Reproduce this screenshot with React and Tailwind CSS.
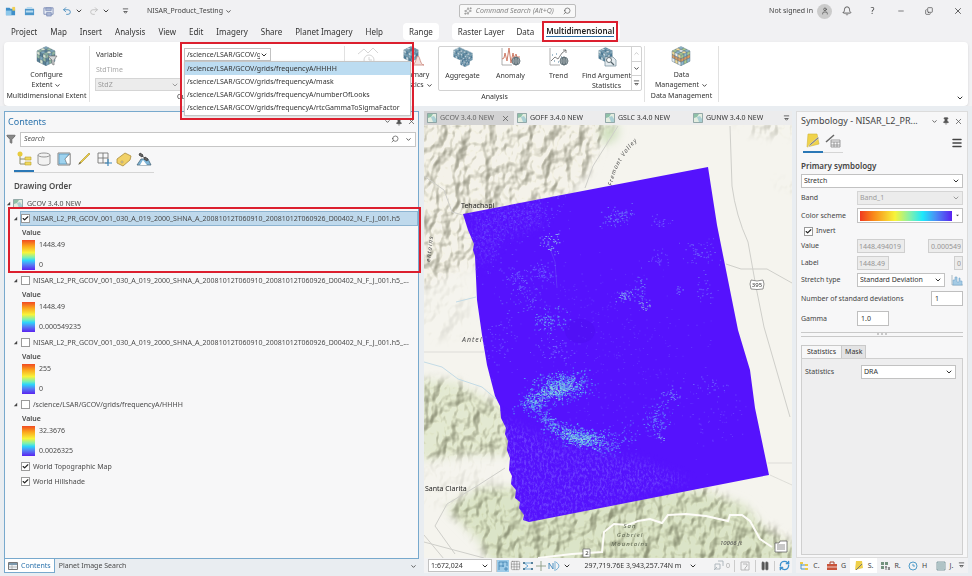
import React, { useState } from "react";
import {
  Bell,
  CheckIcon,
  ChevronDown,
  ChevronUp,
  Copy,
  Funnel,
  Grid3x3,
  Menu,
  Minus,
  Pause,
  Pin,
  Redo2,
  RefreshCw,
  Search,
  Sparkles,
  Undo2,
  User,
  X,
} from "lucide-react";

const MENU = ["Project", "Map", "Insert", "Analysis", "View", "Edit", "Imagery", "Share", "Planet Imagery", "Help"];

const VARIABLES = [
  "/science/LSAR/GCOV/grids/frequencyA/HHHH",
  "/science/LSAR/GCOV/grids/frequencyA/mask",
  "/science/LSAR/GCOV/grids/frequencyA/numberOfLooks",
  "/science/LSAR/GCOV/grids/frequencyA/rtcGammaToSigmaFactor",
];

const H5_NAME =
  "NISAR_L2_PR_GCOV_001_030_A_019_2000_SHNA_A_20081012T060910_20081012T060926_D00402_N_F_J_001.h5";

const LAYERS = [
  { id: "l1", name: H5_NAME, max: "1448.49", min: "0", checked: true },
  { id: "l2", name: H5_NAME + "_...", max: "1448.49", min: "0.000549235", checked: false },
  { id: "l3", name: H5_NAME + "_...", max: "255", min: "0", checked: false },
  { id: "l4", name: VARIABLES[0], max: "32.3676", min: "0.0026325", checked: false },
];

const MAP_TABS = ["GCOV 3.4.0 NEW", "GOFF 3.4.0 NEW", "GSLC 3.4.0 NEW", "GUNW 3.4.0 NEW"];

/* ---------- icons ---------- */

const BLUE_CUBE = ["#6f9db8", "#c7dde8", "#86afc4", "#4d7f9e"];
const DATA_CUBE = ["#8fb9cc", "#f0d896", "#a9c98f", "#e9eef0"];

// 3x3x3 isometric cube
function Cube({ colors = BLUE_CUBE, x = 0, y = 0, size = 20 }) {
  const cells = [];
  const faces = [
    { o: [10, 0.5], u: [3, 1.5], v: [-3, 1.5] },
    { o: [1, 5], u: [3, 1.5], v: [0, 3.4] },
    { o: [10, 9.5], u: [3, -1.5], v: [0, 3.4] },
  ];
  faces.forEach((f, n) => {
    for (let i = 0; i < 3; i++) {
      for (let j = 0; j < 3; j++) {
        const px = f.o[0] + f.u[0] * i + f.v[0] * j;
        const py = f.o[1] + f.u[1] * i + f.v[1] * j;
        const fill = colors === DATA_CUBE && n > 0 && j === 1 ? "#d9995f" : colors[(i * 2 + j + n) % 4];
        cells.push(
          <path
            key={`${n}${i}${j}`}
            d={`M${px} ${py}l${f.u[0]} ${f.u[1]}l${f.v[0]} ${f.v[1]}l${-f.u[0]} ${-f.u[1]}z`}
            fill={fill}
            stroke="#4a6878"
            strokeWidth=".4"
          />
        );
      }
    }
  });
  return (
    <svg x={x} y={y} width={size} height={size} viewBox="0 0 20 20">
      {cells}
    </svg>
  );
}

function Globe({ cx, cy }) {
  return (
    <g fill="#e8eef0" stroke="#53636b" strokeWidth=".8">
      <circle cx={cx} cy={cy} r="4" />
      <path d={`M${cx - 4} ${cy}h8M${cx} ${cy - 4}v8M${cx - 3} ${cy - 2}h6M${cx - 3} ${cy + 2}h6`} fill="none" />
      <ellipse cx={cx} cy={cy} rx="2" ry="4" fill="none" />
    </g>
  );
}

function RibbonIcon({ kind }) {
  return (
    <svg viewBox="0 0 22 20" className="h-5 w-[22px] shrink-0">
      {kind === "configure" && (
        <>
          <Cube colors={["#7fa9bd", "#dbe6d2", "#93b8a2", "#587f94"]} size={20} />
          <path d="M12 10h9l-3 4v5l-2-1v-4z" fill="#d5d8da" stroke="#777" strokeWidth=".7" />
        </>
      )}
      {kind === "summary" && (
        <>
          <Cube size={16} />
          <path d="M9 19c4 0 4-9 6-9s2 9 6 9z" fill="#f4dfdb" stroke="#c98478" strokeWidth=".8" />
        </>
      )}
      {kind === "aggregate" && (
        <>
          <Cube size={13} y={0} x={1} />
          <Cube size={13} y={3} x={8} />
          <Cube size={10} y={10} x={8} />
        </>
      )}
      {kind === "anomaly" && (
        <>
          <path d="M2 1v17h10" fill="none" stroke="#999" strokeWidth=".8" />
          <path d="M2 12l2-1 1-5 2 8 2-13 2 15 2-10 1 5 2-4 1 3h3" fill="none" stroke="#cf7d68" strokeWidth="1" />
          <Globe cx={16} cy={14} />
        </>
      )}
      {kind === "trend" && (
        <>
          <path d="M2 1v17h10" fill="none" stroke="#999" strokeWidth=".8" />
          <path d="M3 14l4-4 3 2 4-6 4-3M15 3h3v3" fill="none" stroke="#666" strokeWidth=".8" />
          <path d="M4 8h1M8 7h1M6 14h1M10 15h1M13 10h1" stroke="#4d7f9e" />
          <Globe cx={16} cy={14} />
        </>
      )}
      {kind === "argument" && (
        <>
          <Cube size={15} x={2} />
          <path d="M9 10h8l3 3v6H9z" fill="#e4ebef" stroke="#6d8795" strokeWidth=".7" />
          <circle cx="13" cy="13" r="2.5" fill="#fff" stroke="#53636b" strokeWidth=".9" />
          <path d="M15 15l3 3" stroke="#53636b" strokeWidth="1.2" />
        </>
      )}
      {kind === "data" && <Cube colors={DATA_CUBE} size={20} x={1} />}
      {kind === "time" && (
        <g fill="none" stroke="#d6d6d6" strokeWidth="1">
          <path d="M1 8l6-5 4 4 5-5 5 5" />
          <circle cx="12" cy="14" r="5" />
          <path d="M12 11v3h3" />
        </g>
      )}
    </svg>
  );
}

function MapIcon() {
  return (
    <svg viewBox="0 0 10 10" className="size-[10px] shrink-0">
      <path d="M.5.5h9v9h-9z" fill="#e3ede0" stroke="#6f8c8c" strokeWidth=".7" />
      <path d="M1 1h5L4 4 1 5z" fill="#8fc1a8" />
      <path d="M4 4l3-1 2 3v3H6z" fill="#a9cfd3" />
    </svg>
  );
}

function FileIcon({ kind }) {
  return (
    <svg viewBox="0 0 12 12" className="size-[11px] shrink-0">
      {kind === "new" && (
        <>
          <path d="M1 2h4l1 1h5v7H1z" fill="#3f8fc9" />
          <path d="M1 5h6v5H1z" fill="#8cc7ea" />
          <path d="M8 1h3v4H8z" fill="#f0cf52" />
        </>
      )}
      {kind === "open" && (
        <>
          <path d="M1 3h10v7H1z" fill="#4d97cb" />
          <path d="M2 5h8v2H2zM3 1h6v2H3z" fill="#b9dcf0" />
        </>
      )}
      {kind === "save" && (
        <>
          <path d="M1 2h10v7H1z" fill="#e7ecf4" stroke="#6577a8" strokeWidth=".8" />
          <path d="M3 2h6v3H3zM4 7h5v4H4z" fill="#a9b6d4" stroke="#6577a8" strokeWidth=".6" />
        </>
      )}
    </svg>
  );
}

function ListIcon({ kind }) {
  return (
    <svg viewBox="0 0 16 16" className="size-4 shrink-0">
      {kind === "order" && (
        <>
          <path d="M4 5v8h6M4 8h6" fill="none" stroke="#8c8c6a" />
          <circle cx="4" cy="3" r="2.5" fill="#e8cb3c" />
          <path d="M9 6h6v3H9zM9 11h6v3H9z" fill="#f0d95c" stroke="#bda22d" strokeWidth=".6" />
        </>
      )}
      {kind === "source" && (
        <g fill="#f2f2f2" stroke="#8b8b8b" strokeWidth=".9">
          <path d="M2 4v8c0 3 12 3 12 0V4" />
          <ellipse cx="8" cy="4" rx="6" ry="2" />
        </g>
      )}
      {kind === "selection" && (
        <>
          <path d="M2 2h12v12H2z" fill="#fff" stroke="#777" strokeWidth=".9" />
          <path d="M3 3h10L9 8l2 5H3z" fill="#9fd3ef" stroke="#4a8db5" strokeWidth=".7" />
          <path d="M9 8l5-5v10l-3 0z" fill="#fff" stroke="#777" strokeWidth=".6" />
        </>
      )}
      {kind === "edit" && (
        <>
          <path d="M13 2l1 1-9 9-2 1 1-2z" fill="#edd048" stroke="#a78e2e" strokeWidth=".6" />
          <path d="M4 11l-2 3 3-2z" fill="#555" />
        </>
      )}
      {kind === "snap" && (
        <>
          <path d="M2 2h10v10H2zM7 2v10M2 7h10" fill="none" stroke="#777" strokeWidth=".9" />
          <path d="M12 8v7M9 12h7" stroke="#3d87bb" strokeWidth="1.2" />
        </>
      )}
      {kind === "label" && (
        <>
          <path d="M1 8l8-6 6 3-1 4-7 6-6-3z" fill="#f1d168" stroke="#a98b3c" strokeWidth=".8" />
          <circle cx="6" cy="11" r="1" fill="#fff" stroke="#8d7330" strokeWidth=".6" />
        </>
      )}
      {kind === "imagery" && (
        <>
          <path d="M1 14l4-6h7l3 6z" fill="#7eb5d8" stroke="#4d6b7c" strokeWidth=".8" />
          <path d="M4 14l3-5 4 5z" fill="#fff" />
          <path d="M4 2l3 2-1 2-3-2zM9 6l3 2-1 2-3-2zM6 5l3 2" fill="#666" stroke="#444" strokeWidth=".9" />
        </>
      )}
    </svg>
  );
}

function Customize() {
  return (
    <svg viewBox="0 0 8 8" className="size-[7px] shrink-0 text-[#555]" fill="none" stroke="currentColor">
      <path d="M1 1h6M2 4l2 2 2-2z" />
    </svg>
  );
}

function Chevron({ className = "size-2" }) {
  return <ChevronDown strokeWidth={3} className={`${className} shrink-0`} />;
}

/* ---------- form bits ---------- */

function Check({ id, checked, children, className = "" }) {
  const [on, setOn] = useState(checked);
  return (
    <div className={`flex min-w-0 items-center gap-[3px] ${className}`}>
      <span className="grid shrink-0">
        <input
          id={id}
          type="checkbox"
          checked={on}
          onChange={(e) => setOn(e.target.checked)}
          className="col-start-1 row-start-1 size-[9px] appearance-none border border-[#9a9a9a] bg-white"
        />
        {on && (
          <CheckIcon strokeWidth={4} className="pointer-events-none col-start-1 row-start-1 size-[9px] p-px text-[#222]" />
        )}
      </span>
      <label htmlFor={id} className="whitespace-nowrap">
        {children}
      </label>
    </div>
  );
}

function SelectBox({ id, label, value, disabled, className = "" }) {
  return (
    <div
      className={`grid items-center border ${
        disabled ? "border-[#d5d5d5] bg-[#ececec] text-[#9c9c9c]" : "border-[#c2c2c2] bg-white text-[#333]"
      } ${className}`}
    >
      <select
        id={id}
        aria-label={label}
        disabled={disabled}
        className="col-start-1 row-start-1 h-full w-full appearance-none overflow-hidden bg-transparent pr-[10px] pl-[2px] text-clip outline-none"
      >
        <option>{value}</option>
      </select>
      <ChevronDown strokeWidth={3} className="pointer-events-none col-start-1 row-start-1 mr-[2px] size-2 justify-self-end" />
    </div>
  );
}

/* ---------- title bar + ribbon ---------- */

function TitleBar() {
  return (
    <header className="flex h-[22px] shrink-0 items-center text-[#444]">
      <div className="flex w-[47%] items-center pl-[5px]">
        <div className="flex items-center gap-2">
          <button aria-label="New project"><FileIcon kind="new" /></button>
          <button aria-label="Open project"><FileIcon kind="open" /></button>
          <button aria-label="Save project"><FileIcon kind="save" /></button>
        </div>
        <button aria-label="Undo" className="ml-2 flex items-center gap-[3px]">
          <Undo2 className="size-[10px] text-[#3c86bb]" />
          <Chevron />
        </button>
        <button aria-label="Redo" className="ml-[6px] flex items-center gap-[3px]">
          <Redo2 className="size-[10px] text-[#bcbcbc]" />
          <Chevron />
        </button>
        <button aria-label="Customize toolbar" className="ml-3">
          <Customize />
        </button>
        <button className="ml-[18px] flex items-center gap-[2px]">
          NISAR_Product_Testing
          <Chevron className="size-[7px]" />
        </button>
      </div>
      <label className="ml-[2px] flex h-[14px] w-[117px] items-center gap-1 rounded-xs border border-[#bdbdbd] bg-[#f8f8f8] px-1">
        <Sparkles className="size-2 text-[#888]" />
        <input
          aria-label="Command Search"
          placeholder="Command Search (Alt+Q)"
          className="min-w-0 flex-1 italic outline-none placeholder:text-[#858585]"
        />
        <Search className="size-2 -scale-x-100 text-[#555]" />
      </label>
      <div className="ml-auto flex items-center pr-[9px]">
        <span>Not signed in</span>
        <span className="ml-1 flex size-[15px] items-center justify-center rounded-full bg-[#cbcbcb]">
          <User className="size-2" />
        </span>
        <button aria-label="Notifications" className="ml-[10px]"><Bell className="size-[10px]" /></button>
        <button className="ml-4 w-[9px] text-[9px]">?</button>
        <button aria-label="Minimize" className="ml-5"><Minus className="size-2" /></button>
        <button aria-label="Restore" className="ml-5"><Copy className="size-2 -scale-y-100" /></button>
        <button aria-label="Close" className="ml-5"><X className="size-[10px]" /></button>
      </div>
    </header>
  );
}

function MenuBar() {
  return (
    <nav className="flex h-5 shrink-0 items-center pb-px pl-[11px] text-[8px] text-[#333]">
      <div className="flex gap-[13px]">
        {MENU.map((m) => (
          <button key={m}>{m}</button>
        ))}
      </div>
      <div className="ml-5 flex h-[17px] items-center rounded-sm bg-white px-[6px]">
        <button>Range</button>
      </div>
      <div className="ml-[13px] flex h-[17px] items-center gap-[12px] rounded-sm bg-white px-[6px]">
        <button>Raster Layer</button>
        <button>Data</button>
        <button className="relative font-semibold text-[#222]">
          <span className="block border-b border-[#2e6da4]">Multidimensional</span>
          <span className="pointer-events-none absolute -inset-x-[4px] -inset-y-[5px] border-2 border-[#dc1f2e]" />
        </button>
      </div>
    </nav>
  );
}

function Tool({ kind, lines, menu, className = "" }) {
  return (
    <button className={`flex flex-col items-center ${className}`}>
      <RibbonIcon kind={kind} />
      <span className="mt-1 flex flex-col items-center leading-[10px]">
        {lines.map((l, i) => (
          <span key={l} className="flex items-center gap-[2px] whitespace-nowrap">
            {l}
            {menu && i === lines.length - 1 && <Chevron className="size-[7px]" />}
          </span>
        ))}
      </span>
    </button>
  );
}

function Group({ title, className = "", children }) {
  return (
    <section className={`flex flex-col border-r border-[#e1e1e1] ${className}`}>
      <div className="flex flex-1 justify-center">{children}</div>
      <h2 className="text-center leading-3">{title}</h2>
    </section>
  );
}

function VariablePicker() {
  return (
    <div className="relative">
      <SelectBox
        id="variable"
        value="/science/LSAR/GCOV/grids/frequencyA/HHHH"
        className="h-[13px] w-[87px]"
      />
      <ul
        role="listbox"
        aria-label="Variable"
        className="absolute top-[13px] left-0 z-20 w-[227px] border border-[#c6c6c6] bg-white pb-px text-[#333] shadow"
      >
        {VARIABLES.map((v, i) => (
          <li
            key={v}
            role="option"
            aria-selected={i === 0}
            className={`h-[13px] pl-[2px] leading-[13px] whitespace-nowrap ${i === 0 ? "bg-[#bcdcf1]" : ""}`}
          >
            {v}
          </li>
        ))}
      </ul>
      <span className="pointer-events-none absolute -top-[6px] -left-[4px] z-30 h-[78px] w-[234px] border-2 border-[#dc1f2e]" />
    </div>
  );
}

function Ribbon() {
  return (
    <div className="mx-1 flex h-[64px] shrink-0 rounded-sm bg-white py-1 text-[#333] shadow-sm">
      <Group title="Multidimensional Extent" className="w-[86px]">
        <Tool kind="configure" lines={["Configure", "Extent"]} menu />
      </Group>
      <section className="flex w-[255px] flex-col border-r border-[#e1e1e1] pl-[5px]">
        <div className="grid flex-1 grid-cols-[89px_1fr] content-start gap-y-[2px] pt-[2px]">
          <label htmlFor="variable" className="pl-px leading-[13px]">Variable</label>
          <VariablePicker />
          <span className="col-start-1 pl-px leading-[13px] text-[#a8a8a8]">StdTime</span>
          <SelectBox label="Dimension" value="StdZ" disabled className="col-start-1 h-[13px] w-[87px]" />
        </div>
        <h2 className="pl-[82px] leading-3">Current Display Slice</h2>
      </section>
      <Group title="Analysis" className="w-[300px]">
        <Tool kind="time" lines={["Profile"]} className="ml-2 w-6" />
        <Tool kind="summary" lines={["Summary", "Statistics"]} menu className="ml-[10px] w-12" />
        <div className="flex h-[45px] rounded-xs border border-[#d2d2d2]">
          <Tool kind="aggregate" lines={["Aggregate"]} className="w-12" />
          <Tool kind="anomaly" lines={["Anomaly"]} className="w-12" />
          <Tool kind="trend" lines={["Trend"]} className="w-12" />
          <Tool kind="argument" lines={["Find Argument", "Statistics"]} className="w-12" />
          <div className="flex w-[10px] flex-col divide-y divide-[#d2d2d2] border-l border-[#d2d2d2]">
            <button aria-label="Scroll up" className="flex flex-1 items-center justify-center text-[#aaa]">
              <ChevronUp className="size-[7px]" />
            </button>
            <button aria-label="Scroll down" className="flex flex-1 items-center justify-center">
              <Chevron className="size-[7px]" />
            </button>
            <button aria-label="More" className="flex flex-1 items-center justify-center">
              <Customize />
            </button>
          </div>
        </div>
      </Group>
      <Group title="Data Management" className="w-[74px]">
        <Tool kind="data" lines={["Data", "Management"]} menu />
      </Group>
      <button aria-label="Collapse ribbon" className="mt-auto mr-1 ml-auto">
        <Chevron />
      </button>
    </div>
  );
}

/* ---------- contents pane ---------- */

function PaneButtons() {
  return (
    <div className="ml-auto flex shrink-0 items-center gap-1 text-[#555]">
      <button aria-label="Pane options"><Chevron className="size-[7px]" /></button>
      <button aria-label="Auto hide"><Pin className="size-2 fill-current" /></button>
      <button aria-label="Close pane"><X className="size-[9px]" /></button>
    </div>
  );
}

function Expander() {
  return (
    <svg viewBox="0 0 6 6" className="size-[5px] shrink-0">
      <path d="M5 1v4H1z" fill="#444" />
    </svg>
  );
}

function LayerItem({ layer, selected }) {
  return (
    <li className="relative h-[62px]">
      <div className="flex h-[15px] items-center gap-[2px] pl-2">
        <Expander />
        <div
          className={`flex h-full min-w-0 flex-1 items-center ${
            selected ? "border border-[#8db4d1] bg-[#bfd9ec]" : "pl-px"
          }`}
        >
          <Check id={layer.id} checked={layer.checked}>
            {layer.name}
          </Check>
        </div>
      </div>
      <h4 className="pl-[17px] leading-[14px] font-semibold">Value</h4>
      <div className="flex h-[30px] gap-1 pl-[17px]">
        <span className="w-[13px] bg-[linear-gradient(to_bottom,#f04a23,#fca51c_20%,#f7f43a_42%,#7df0b0_58%,#2ed5fa_68%,#5580f5_82%,#5a22f0)]" />
        <span className="flex flex-col justify-between leading-[10px]">
          <span>{layer.max}</span>
          <span>{layer.min}</span>
        </span>
      </div>
      {selected && (
        <span className="pointer-events-none absolute -top-[4px] -right-[3px] bottom-0 left-[3px] z-10 border-2 border-[#dc1f2e]" />
      )}
    </li>
  );
}

function ContentsPane() {
  const tabs = ["order", "source", "selection", "edit", "snap", "label", "imagery"];
  return (
    <aside className="flex w-[415px] shrink-0 flex-col text-[#4a4a4a]">
      <div className="flex min-h-0 flex-1 flex-col border border-[#78a9cd] bg-[#f7f7f8]">
        <div className="flex h-[19px] items-center pr-[2px] pl-[3px]">
          <h2 className="text-[9px] leading-3 text-[#2d74ad]">Contents</h2>
          <PaneButtons />
        </div>
        <div className="flex h-4 items-center gap-1 pr-[2px] pl-px">
          <Funnel className="size-[10px] shrink-0 fill-[#888] text-[#666]" />
          <div className="flex h-[15px] flex-1 items-center border border-[#c6c6c6] bg-white px-[3px]">
            <input aria-label="Search" placeholder="Search" className="flex-1 italic outline-none placeholder:text-[#555]" />
            <Search className="mr-[6px] size-2 -scale-x-100" />
            <Chevron className="size-[7px]" />
          </div>
        </div>
        <div className="mt-1 ml-[9px] flex self-start border-b border-[#d5d5d5]">
          {tabs.map((t, i) => (
            <button
              key={t}
              aria-label={"List by " + t}
              className={`flex h-[21px] w-5 justify-center ${i === 0 ? "border-b-2 border-[#2b78b6]" : ""}`}
            >
              <ListIcon kind={t} />
            </button>
          ))}
        </div>
        <h3 className="mt-[5px] pl-[9px] text-[8px] leading-4 font-semibold">Drawing Order</h3>
        <ul className="mt-[3px] min-h-0 flex-1">
          <li>
            <div className="flex h-[13px] items-center gap-[2px] pl-px">
              <Expander />
              <MapIcon />
              <span className="pl-[2px]">GCOV 3.4.0 NEW</span>
            </div>
            <ul className="mt-px">
              {LAYERS.map((l, i) => (
                <LayerItem key={l.id} layer={l} selected={i === 0} />
              ))}
              <li>
                <Check id="topo" checked className="h-[15px] pl-4">World Topographic Map</Check>
              </li>
              <li>
                <Check id="hill" checked className="h-[15px] pl-4">World Hillshade</Check>
              </li>
            </ul>
          </li>
        </ul>
      </div>
      <div className="flex h-[14px] items-center">
        <button className="flex h-full items-center gap-[3px] border border-t-0 border-[#78a9cd] bg-white px-[3px] text-[#2d74ad]">
          <svg viewBox="0 0 10 8" className="h-2 w-[10px]">
            <path d="M.5.5h9v7h-9z" fill="#f0f4f7" stroke="#777" />
            <path d="M1 1h8v2H1z" fill="#7d99ad" />
            <path d="M1 5h8M4 3v4" stroke="#999" strokeWidth=".6" />
          </svg>
          Contents
        </button>
        <button className="px-1">Planet Image Search</button>
        <button aria-label="More panes" className="mr-[2px] ml-auto"><Chevron className="size-[7px]" /></button>
      </div>
    </aside>
  );
}

/* ---------- map ---------- */

function rng(seed) {
  let s = seed;
  return () => {
    s = (s * 16807) % 2147483647;
    return s / 2147483647;
  };
}

// cx, cy, rx, ry, tilt, count, color
const SPECKS = [
  [558, 388, 30, 13, -0.15, 420, "#5590f4"],
  [562, 385, 22, 10, -0.1, 190, "#6cbdee"],
  [555, 391, 20, 7, -0.3, 110, "#8ad0df"],
  [533, 404, 15, 12, 0.3, 150, "#5590f4"],
  [536, 400, 12, 9, 0, 50, "#78c0ea"],
  [548, 421, 16, 6, 0.7, 90, "#5c86f6"],
  [556, 427, 14, 6, 0.5, 60, "#6cb5ee"],
  [576, 436, 26, 9, 0.25, 260, "#5590f4"],
  [588, 439, 22, 8, 0.1, 190, "#6cbdee"],
  [580, 438, 22, 6, 0.2, 80, "#8ad8df"],
  [614, 441, 22, 13, -0.3, 130, "#5f6cfa"],
  [657, 420, 13, 17, 0.2, 120, "#6078fa"],
  [671, 395, 11, 7, -0.4, 40, "#6c78f8"],
  [660, 437, 5, 4, 0, 10, "#7a9cf0"],
  [525, 212, 42, 22, -0.3, 260, "#6440ff"],
  [490, 240, 25, 36, 0.2, 170, "#6542ff"],
  [617, 216, 18, 9, -0.2, 90, "#6a6cfa"],
  [551, 243, 11, 8, 0.2, 44, "#83a1ef"],
  [542, 272, 12, 10, 0, 70, "#6958ff"],
  [516, 279, 12, 9, 0, 60, "#6958ff"],
  [550, 319, 17, 11, -0.2, 90, "#6593f3"],
  [525, 297, 20, 14, 0, 70, "#6655fb"],
  [624, 296, 7, 6, 0, 44, "#7a9af2"],
  [640, 290, 7, 16, 0, 45, "#6971fa"],
  [646, 306, 6, 4, 0, 18, "#8aaee4"],
  [702, 253, 20, 12, 0.2, 60, "#6a58fb"],
  [706, 288, 10, 12, 0, 30, "#6a58fb"],
  [678, 291, 5, 5, 0, 14, "#6f70fb"],
  [660, 220, 9, 5, 0, 24, "#6a50ff"],
  [660, 258, 10, 8, 0, 30, "#6a50ff"],
  [710, 386, 20, 8, 0, 30, "#6a58ff"],
  [720, 418, 30, 20, 0, 44, "#663aff"],
  [500, 345, 16, 26, 0.3, 70, "#6848ff"],
  [580, 320, 75, 60, 0.3, 240, "#6130ff"],
  [620, 390, 90, 70, 0.2, 320, "#6130ff"],
  [555, 350, 20, 10, 0.2, 50, "#6f60ff"],
];

function speckPath(seed, [cx, cy, rx, ry, tilt, n]) {
  const r = rng(seed);
  let d = "";
  for (let i = 0; i < n; i++) {
    const x = (r() + r() + r() - 1.5) * rx;
    const y = (r() + r() + r() - 1.5) * ry * 1.1;
    const px = (cx + x * Math.cos(tilt) - y * Math.sin(tilt)).toFixed(1);
    const py = (cy + x * Math.sin(tilt) + y * Math.cos(tilt)).toFixed(1);
    const w = (0.6 + r() * 1.1).toFixed(1);
    d += `M${px} ${py}h${w}v1h-${w}z`;
  }
  return d;
}

const RASTER =
  "M463 214L708 167L717 225L738 330L750 370L755 408L769 475L529 522L523 520L524 515L519 508L520 502L515 498L516 490L511 484L512 476L509 470L510 458L507 450L508 441L505 434L506 428L501 418L500 406L495 396L487 365L482 335L477 300L475 256L473 250L474 244L468 230Z";

function MapView() {
  return (
    <svg
      viewBox="424 125 368 433"
      preserveAspectRatio="xMidYMid slice"
      className="min-h-0 w-full flex-1 bg-[#f5f4ee]"
      role="img"
      aria-label="Map view"
    >
      <defs>
        <filter id="relief" x="0" y="0" width="1" height="1" colorInterpolationFilters="sRGB">
          <feTurbulence type="fractalNoise" baseFrequency=".065 .045" numOctaves="3" seed="8" />
          <feColorMatrix values="0 0 0 0 0 0 0 0 0 0 0 0 0 0 0 1 0 0 0 0" />
          <feDiffuseLighting surfaceScale="9" diffuseConstant="1.2" lightingColor="#fffef8">
            <feDistantLight azimuth="225" elevation="52" />
          </feDiffuseLighting>
          <feColorMatrix values=".36 0 0 0 .65 0 .36 0 0 .65 0 0 .4 0 .6 0 0 0 0 1" />
        </filter>
        <filter id="grain" x="0" y="0" width="1" height="1" colorInterpolationFilters="sRGB">
          <feTurbulence type="fractalNoise" baseFrequency=".45 .28" numOctaves="3" seed="3" />
          <feColorMatrix values="0 0 0 0 .48 0 0 0 0 .36 0 0 0 0 1 3 0 0 0 -1.3" />
        </filter>
        <filter id="soft">
          <feGaussianBlur stdDeviation="5" />
        </filter>
        <mask id="hills" maskUnits="userSpaceOnUse" x="424" y="125" width="368" height="433">
          <g filter="url(#soft)" fill="#fff">
            <path d="M410 110H618L590 170L560 200L480 214L480 262L424 285H410z" />
            <path d="M410 378L455 382L500 405L520 455L470 455L410 462z" />
            <path d="M446 508L480 488H520L700 480L760 520L800 545V570H495L478 540z" />
            <path d="M730 120h70v14l-40 4zM770 180l30 6v10z" opacity=".5" />
            <path d="M410 450h90v30l-40 20l-50 8zM410 280h60v60h-60z" opacity=".2" />
          </g>
        </mask>
        <mask id="south" maskUnits="userSpaceOnUse" x="424" y="125" width="368" height="433">
          <g filter="url(#soft)" fill="#fff">
            <path d="M490 412L560 445L640 460L690 480L540 525H515z" />
            <path d="M470 215L540 200L545 225L500 240L485 270L472 250z" opacity=".6" />
          </g>
        </mask>
        <clipPath id="rasterClip">
          <path d={RASTER} />
        </clipPath>
      </defs>

      <rect x="424" y="125" width="368" height="433" fill="#f5f4ee" />
      <g filter="url(#soft)">
        <path d="M410 378L455 382L505 408L520 455L470 455L410 462z" fill="#e3e9d2" />
        <path d="M446 508L480 488H520L700 490L745 505L765 530L800 550V570H495L478 540z" fill="#dbe4c8" />
        <path d="M410 110H610L590 170L560 200L480 214L480 262L410 290z" fill="#f4f2ea" />
        <path d="M600 126h20l-4 14-14 4z" fill="#cfe0bd" />
      </g>
      <g mask="url(#hills)" style={{ mixBlendMode: "multiply" }}>
        <rect x="424" y="125" width="368" height="433" filter="url(#relief)" />
      </g>

      <g fill="none" stroke="#cfcfca">
        <path d="M730 126l2 60q4 30 16 56l8 45 8 40 26 90" />
        <path d="M424 176l20 14 8 22 14 4M618 126l-25 40-8 22M726 264l15 5h26l25 14" />
        <path d="M505 468l-28 18-30 18-12 22 20 28M424 535l20 24M424 542l60 16" />
        <path d="M424 352h60M768 463h24M770 475l22 10" strokeWidth=".6" />
      </g>
      <path d="M424 362l18 5 16 12 24 8 14 12M456 302l20-5" fill="none" stroke="#c3dbe6" />
      <path
        d="M538 558l34-4 30-2 2-20 10-8 14 1 10-4 12-2 12 4 6-8 18-1 20 2 22 5 2-6h12l8 6 10 18 12 8"
        fill="none"
        stroke="#fdfcf8"
        strokeWidth="2"
      />

      <g fontFamily='"Noto Sans", sans-serif' fontSize="7" fill="#4d4d4d">
        <text x="461" y="208" fill="#222">Tehachapi</text>
        <path id="fremont" d="M612 186Q617 155 650 130" fill="none" />
        <text fontSize="6" fontStyle="italic" letterSpacing="1">
          <textPath href="#fremont">Fremont Valley</textPath>
        </text>
        <text x="462" y="342" fontStyle="italic" letterSpacing="1">Antelope</text>
        <text x="425" y="491" fill="#222">Santa Clarita</text>
        <text fontSize="6" fontStyle="italic" letterSpacing="1" transform="translate(430 262) rotate(-83)">entains</text>
        <g fontSize="6" fontStyle="italic" textAnchor="middle" letterSpacing="1" fill="#5d6552">
          <text x="630" y="528">San</text>
          <text x="630" y="537">Gabriel</text>
          <text x="630" y="546">Mountains</text>
        </g>
        <text x="720" y="545" fontStyle="italic" fontSize="6">10066 ft</text>
      </g>

      <g>
        <path d={RASTER} fill="#5512fd" />
        <g clipPath="url(#rasterClip)">
          <g mask="url(#south)">
            <rect x="460" y="165" width="312" height="360" filter="url(#grain)" opacity=".6" />
          </g>
          <ellipse cx="580" cy="331" rx="15" ry="12" fill="#5110f6" />
          {SPECKS.map((s, i) => (
            <path key={i} d={speckPath(i * 977 + 31, s)} fill={s[6]} />
          ))}
          <path d="M547 240l8 22 2 26" fill="none" stroke="#6f55f5" strokeWidth=".5" />
        </g>
      </g>

      <g fill="#fff" stroke="#777" strokeWidth=".8">
        <path d="M751 280q6 2 12 0l1 4-1 5q-6 1-12 0l-1-5z" />
        <path d="M583 549h7v8h-7z" />
        <path d="M775 543h4l1-2h7v11h-12z" stroke="#666" />
        <path d="M777 545h8M777 547h8M777 549h8" />
      </g>
      <g fontFamily='"Noto Sans", sans-serif' fontSize="6" fill="#333" textAnchor="middle">
        <text x="757" y="287">395</text>
        <text x="587" y="555">2</text>
      </g>
    </svg>
  );
}

function StatusIcon({ kind }) {
  return (
    <svg viewBox="0 0 12 12" className="size-3 shrink-0" fill="none">
      {kind === "constraints" && (
        <>
          <path d="M0 0h12v12H0z" fill="#9dcbe8" />
          <path d="M2 10V2h8v4M2 6h5M6 2v5M9 7v4M7 9h4" stroke="#3d82b0" strokeWidth=".8" />
        </>
      )}
      {kind === "snap" && (
        <>
          <path d="M2 3h8M2 9h8M2 3l4 3-4 3" stroke="#4a9bd0" strokeWidth=".8" />
          <path d="M1 2h2v2H1zM9 2h2v2H9zM9 8h2v2H9zM1 8h2v2H1z" fill="#55809a" />
        </>
      )}
      {kind === "cross" && <path d="M6 1v10M1 6h10" stroke="#8b9b84" strokeWidth=".9" />}
      {kind === "north" && (
        <>
          <path d="M1 3v6M1 3l4 6V3" stroke="#3d87bb" strokeWidth=".9" />
          <path d="M7 1v10M8 2q3 2 3 4t-3 4" stroke="#6ca9d0" strokeWidth=".9" />
        </>
      )}
      {kind === "selected" && (
        <path d="M2 4h5v5H2zM5 1h5v5M1 10l3-3" stroke="#a9b2b8" strokeWidth=".9" />
      )}
      {kind === "extent" && <path d="M2 2h8v8H2zM4 4h4v2L6 8v2" stroke="#b2b2b2" strokeWidth=".9" />}
    </svg>
  );
}

function MapPane() {
  return (
    <main className="ml-px flex min-w-0 flex-1 flex-col text-[#333]">
      <div className="flex h-[14px] shrink-0 items-center bg-[#ececed]">
        {MAP_TABS.map((t, i) => (
          <button
            key={t}
            className={`flex h-full items-center gap-[3px] pl-[3px] whitespace-nowrap ${
              i === 0 ? "w-[90px] bg-[#d2d2d3] pr-1 text-[#666]" : "w-[88px]"
            }`}
          >
            <MapIcon />
            {t}
            {i === 0 && <X className="ml-auto size-[9px] text-[#555]" />}
          </button>
        ))}
        <button aria-label="View list" className="mr-[2px] ml-auto"><Customize /></button>
      </div>
      <MapView />
      <div className="flex h-[15px] shrink-0 items-center bg-[#f3f3f4]">
        <SelectBox label="Map scale" value="1:672,024" className="ml-1 h-[13px] w-[64px]" />
        <div className="ml-[4px] flex items-center gap-px border-l border-[#ccc]">
          <button aria-label="Constraints"><StatusIcon kind="constraints" /></button>
          <button aria-label="Grid"><Grid3x3 strokeWidth={1} className="size-[11px] text-[#666]" /></button>
          <button aria-label="Snapping"><StatusIcon kind="snap" /></button>
          <button aria-label="Inference"><StatusIcon kind="cross" /></button>
          <button aria-label="North"><StatusIcon kind="north" /></button>
          <button aria-label="More tools" className="mx-[2px]"><Chevron /></button>
        </div>
        <button className="mx-auto flex items-center gap-2 whitespace-nowrap">
          297,719.76E 3,943,257.74N m
          <Chevron />
        </button>
        <div className="mr-[2px] flex items-center divide-x divide-[#ccc]">
          <button className="flex items-center gap-px px-1 text-[#aaa]">
            <StatusIcon kind="selected" />0
          </button>
          <button aria-label="Extent" className="px-1"><StatusIcon kind="extent" /></button>
          <button aria-label="Pause drawing" className="px-1"><Pause className="size-[10px] fill-current text-[#555]" /></button>
          <button aria-label="Refresh" className="pl-1"><RefreshCw strokeWidth={3} className="size-[11px] text-[#3d91cd]" /></button>
        </div>
      </div>
    </main>
  );
}

/* ---------- symbology pane ---------- */

function Row({ label, htmlFor, children, className = "h-[14px]" }) {
  return (
    <div className={`flex items-center ${className}`}>
      <label htmlFor={htmlFor} className="w-14 shrink-0">{label}</label>
      <div className="flex flex-1 items-center justify-between">{children}</div>
    </div>
  );
}

function TextBox({ id, label, value, readOnly, className = "" }) {
  return (
    <input
      id={id}
      aria-label={label}
      defaultValue={value}
      readOnly={readOnly}
      className={`border outline-none ${
        readOnly
          ? "h-[14px] border-[#cfcfcf] bg-[#ececec] px-px text-[#959595]"
          : "h-[15px] border-[#bfbfbf] bg-white px-[3px] text-[#333]"
      } ${className}`}
    />
  );
}

function SymbologyPane() {
  return (
    <div className="flex min-h-0 flex-1 flex-col border border-[#dcdcdc] bg-[#f7f7f8] px-1 text-[#444]">
      <div className="flex h-[18px] items-center">
        <h2 className="text-[9px] leading-3 whitespace-nowrap">Symbology - NISAR_L2_PR...</h2>
        <PaneButtons />
      </div>
      <div className="mt-[3px] flex items-start">
        <button aria-label="Primary symbology" className="ml-[2px] flex h-5 w-5 justify-center border-b-2 border-[#2b78b6]">
          <svg viewBox="0 0 16 16" className="size-4">
            <path d="M3 1h9l2 10-12 3z" fill="#f0d34b" stroke="#d2b63b" strokeWidth=".6" />
            <path d="M14 5l-8 7-3 2 2-3 8-7z" fill="#777" stroke="#fff" strokeWidth=".4" />
          </svg>
        </button>
        <button aria-label="Vary symbology" className="flex h-5 w-5 justify-center border-b border-[#d5d5d5]">
          <svg viewBox="0 0 16 16" className="size-4" fill="none" stroke="#888">
            <path d="M1 9l8-7" stroke="#666" strokeWidth="1.5" />
            <path d="M6 7h9v7H6zM6 9h9M9 9v5M12 9v5M6 12h9" strokeWidth=".8" />
          </svg>
        </button>
        <button aria-label="Pane menu" className="mt-1 ml-auto"><Menu strokeWidth={3} className="size-3" /></button>
      </div>
      <h3 className="mt-[5px] text-[8px] leading-4 font-semibold">Primary symbology</h3>
      <SelectBox label="Primary symbology" value="Stretch" className="h-[14px]" />
      <div className="mt-[3px] flex flex-col gap-[3px]">
        <Row label="Band" htmlFor="band">
          <SelectBox id="band" value="Band_1" disabled className="h-[14px] w-full" />
        </Row>
        <Row label="Color scheme" htmlFor="scheme" className="h-[15px]">
          <button id="scheme" className="flex h-[15px] w-full items-center border border-[#c2c2c2] bg-white pl-[2px]">
            <span className="h-[10px] flex-1 bg-[linear-gradient(to_right,#f03a20,#f98a1a_15%,#f7f43a_38%,#7df0b0_55%,#1ee8fa_68%,#4a90f5_82%,#5a22f0)]" />
            <span className="flex w-[10px] justify-center">
              <svg viewBox="0 0 4 4" className="size-[3px]"><path d="M0 1h4L2 3z" fill="#444" /></svg>
            </span>
          </button>
        </Row>
      </div>
      <Check id="invert" checked className="mt-px h-[14px] pl-[3px]">Invert</Check>
      <div className="mt-px flex flex-col gap-[3px]">
        <Row label="Value" htmlFor="vmax">
          <TextBox id="vmax" value="1448.494019" readOnly className="w-12" />
          <TextBox label="Minimum value" value="0.000549" readOnly className="w-[35px] text-right" />
        </Row>
        <Row label="Label" htmlFor="lmax">
          <TextBox id="lmax" value="1448.49" readOnly className="w-8" />
          <TextBox label="Minimum label" value="0" readOnly className="w-[9px] text-right" />
        </Row>
        <Row label="Stretch type" htmlFor="stype">
          <SelectBox id="stype" value="Standard Deviation" className="h-[14px] w-[88px]" />
          <button aria-label="Histogram">
            <svg viewBox="0 0 12 12" className="size-3">
              <path d="M1 1v10h11" fill="none" stroke="#8fa3b0" strokeWidth=".7" />
              <path d="M2 11V6h2V3h2v5h2V4h1v3h2v4z" fill="#a5cbe4" stroke="#76a9cc" strokeWidth=".6" />
            </svg>
          </button>
        </Row>
        <div className="flex h-[17px] items-center justify-between">
          <label htmlFor="nstd">Number of standard deviations</label>
          <TextBox id="nstd" value="1" className="w-8" />
        </div>
        <Row label="Gamma" htmlFor="gamma" className="h-[17px]">
          <TextBox id="gamma" value="1.0" className="w-8" />
        </Row>
      </div>
      <div className="mt-[5px] flex h-[5px] items-center justify-center border-y border-[#c9c9c9] text-[#999]">
        <svg viewBox="0 0 12 3" className="h-[3px] w-3"><path d="M1 1h2M5 1h2M9 1h2" stroke="currentColor" /></svg>
      </div>
      <div className="mt-2 flex">
        <button className="h-[13px] border border-b-0 border-[#c9c9c9] px-[5px] text-[#333]">Statistics</button>
        <button className="h-[13px] border border-b-0 border-l-0 border-[#c9c9c9] bg-[#e3e3e4] px-[3px] text-[#333]">Mask</button>
      </div>
      <div className="mb-[2px] flex-1 border border-[#cfcfcf] bg-[#eeeeef] px-[3px] pt-[6px]">
        <div className="flex items-center">
          <label htmlFor="stats" className="w-14 shrink-0">Statistics</label>
          <SelectBox id="stats" value="DRA" className="mr-[3px] h-[14px] flex-1" />
        </div>
      </div>
    </div>
  );
}

const DOCK_TABS = ["C.", "G", "S.", "R.", "H", "J."];

function DockIcon({ name }) {
  return (
    <svg viewBox="0 0 10 10" className="size-[10px] shrink-0" fill="none">
      {name === "C." && (
        <>
          <path d="M2 3v5h4M2 4h4" stroke="#4a93c4" />
          <path d="M1 1h3v2H1zM6 3h3v2H6zM6 7h3v2H6z" fill="#ecc945" />
        </>
      )}
      {name === "G" && (
        <>
          <path d="M3 3V1h4v2" stroke="#a8432f" />
          <path d="M0 3h10v6H0z" fill="#c9533a" />
          <path d="M0 6h10" stroke="#fff" strokeWidth=".7" />
        </>
      )}
      {name === "S." && (
        <>
          <path d="M2 0h6l1 7-8 2z" fill="#efd04a" />
          <path d="M8 3L2 9" stroke="#777" />
        </>
      )}
      {name === "R." && (
        <>
          <path d="M1 1h3v3H1zM5 1h3v3H5zM1 5h3v3H1z" fill="#72917d" />
          <path d="M6 5v4M5 6h2M8 6l2 3M10 6L8 9" stroke="#555" strokeWidth=".8" />
        </>
      )}
      {name === "H" && (
        <>
          <circle cx="5" cy="5" r="4" stroke="#519cc9" />
          <path d="M5 3v2h2" stroke="#519cc9" />
        </>
      )}
      {name === "J." && (
        <>
          <path d="M1 1h8v8H1z" fill="#dce9ec" stroke="#6d8b90" strokeWidth=".8" />
          <path d="M2 3h6M2 5h6M2 7h6" stroke="#6d8b90" strokeWidth=".8" />
        </>
      )}
    </svg>
  );
}

export default function App() {
  return (
    <div className="flex h-screen flex-col overflow-hidden bg-[#f1f1f3] font-['Noto_Sans','Open_Sans',sans-serif] text-[7px] leading-[10px]">
      <TitleBar />
      <MenuBar />
      <Ribbon />
      <div className="flex min-h-0 flex-1 gap-1 bg-[#e9edf1] px-1 pt-[5px] pb-[3px]">
        <ContentsPane />
        <MapPane />
        <aside className="flex w-[172px] shrink-0 flex-col">
          <SymbologyPane />
          <div className="flex h-[15px] shrink-0 items-center bg-[#f1f1f3] text-[#444]">
            {DOCK_TABS.map((t) => (
              <button key={t} className={`flex h-full flex-1 items-center justify-center gap-1 ${t === "S." ? "bg-white" : ""}`}>
                <DockIcon name={t} />
                {t}
              </button>
            ))}
            <button aria-label="More panes" className="mr-[3px]"><Customize /></button>
          </div>
        </aside>
      </div>
    </div>
  );
}
